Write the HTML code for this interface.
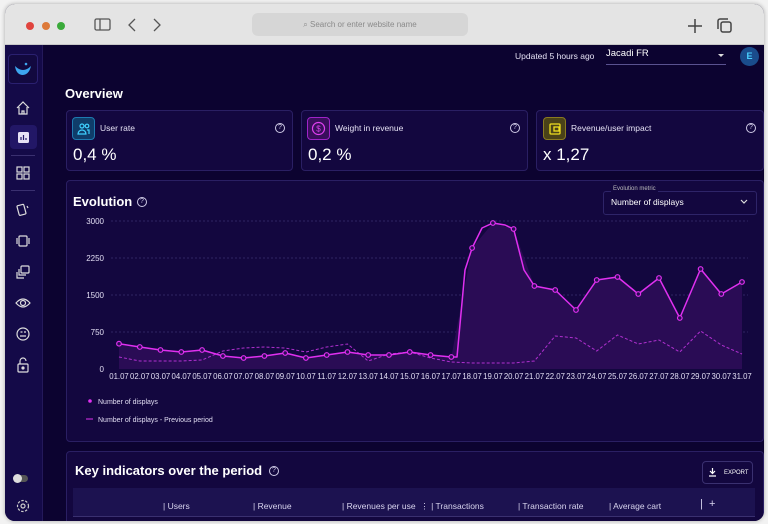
<!DOCTYPE html>
<html><head><meta charset="utf-8"><style>
*{box-sizing:border-box;margin:0;padding:0}
body{width:768px;height:524px;background:#f2f2f2;font-family:"Liberation Sans",sans-serif;overflow:hidden;position:relative}
.win{position:absolute;left:5px;top:4px;width:759px;height:517px;border-radius:10px;overflow:hidden;background:#0c0330;box-shadow:0 0 4px rgba(0,0,0,.3)}
.bar{position:absolute;left:0;top:0;width:100%;height:41px;background:#e4e4e4;border-bottom:1px solid #c8c8c8}
.dot{position:absolute;top:18px;width:8px;height:8px;border-radius:50%}
.url{position:absolute;left:247px;top:9px;width:216px;height:23px;border-radius:6px;background:#d6d6d6;font-size:8px;color:#8a8a8a;text-align:center;line-height:23px}
.side{position:absolute;left:0;top:41px;width:38px;height:480px;background:#140a48;border-right:1px solid #24195a}
.ic{position:absolute;left:10px;color:#d8d4f0}
.card{position:absolute;background:#13073f;border:1px solid #2a1f63;border-radius:4px}
.lbl{position:absolute;font-size:8.5px;color:#e6e2f5}
.big{position:absolute;font-size:17px;color:#fff}
.q{position:absolute;width:10px;height:10px;border:1px solid #cfcae6;border-radius:50%;font-size:7px;color:#cfcae6;text-align:center;line-height:8px}
.th{position:absolute;top:497px;font-size:8.5px;color:#d8d4ee}
</style></head><body>
<div class="win">
 <div class="bar">
  <div class="dot" style="left:21px;background:#e0443e"></div>
  <div class="dot" style="left:37px;background:#dd7a3a"></div>
  <div class="dot" style="left:52px;background:#3aaa3a"></div>
  <svg style="position:absolute;left:89px;top:13px" width="70" height="16" fill="none" stroke="#555" stroke-width="1.3"><rect x="1" y="2" width="15" height="11" rx="1.5"/><line x1="6" y1="2" x2="6" y2="13"/><path d="M41 2l-6 6 6 6M60 2l6 6-6 6"/></svg>
  <div class="url">&#x2315; Search or enter website name</div>
  <svg style="position:absolute;left:682px;top:13px" width="50" height="18" fill="none" stroke="#444" stroke-width="1.5"><path d="M8 2v14M1 9h14"/><rect x="34" y="5" width="10" height="10" rx="2"/><path d="M31 12V4a2 2 0 0 1 2-2h8"/></svg>
 </div>
 <div class="side">
  <div style="position:absolute;left:3px;top:9px;width:30px;height:30px;border:1px solid #2a2070;border-radius:4px;background:#12093f"></div>
  <svg style="position:absolute;left:9px;top:16px" width="18" height="16"><path d="M1 5 Q9 13 17 5 Q15 14 8 14 Q2 13 1 5Z" fill="#3da6f0"/><circle cx="12" cy="3" r="1.3" fill="#3da6f0"/></svg>
  <svg class="ic" style="top:55px" width="16" height="16" fill="none" stroke="#ddd" stroke-width="1.2"><path d="M2 8L8 2l6 6M4 7v7h8V7"/><path d="M7 14v-3h2v3"/></svg>
  <div style="position:absolute;left:5px;top:80px;width:27px;height:24px;border-radius:4px;background:#221766"></div>
  <svg class="ic" style="top:85px" width="16" height="16"><rect x="3" y="2" width="11" height="11" rx="1.5" fill="#e6e2f5"/><path d="M6 10V7M8.5 10V5M11 10V8" stroke="#221766" stroke-width="1.2"/></svg>
  <div style="position:absolute;left:6px;top:110px;width:24px;height:1px;background:#3a3070"></div>
  <svg class="ic" style="top:120px" width="16" height="16" fill="none" stroke="#ddd" stroke-width="1.2"><rect x="2" y="2" width="5" height="5"/><rect x="9" y="2" width="5" height="5"/><rect x="2" y="9" width="5" height="5"/><rect x="9" y="9" width="5" height="5"/></svg>
  <div style="position:absolute;left:6px;top:145px;width:24px;height:1px;background:#3a3070"></div>
  <svg class="ic" style="top:157px" width="16" height="16" fill="none" stroke="#ddd" stroke-width="1.2"><rect x="3" y="3" width="7" height="10" rx="1" transform="rotate(-15 6 8)"/><path d="M12 4l1 2"/></svg>
  <svg class="ic" style="top:188px" width="16" height="16" fill="none" stroke="#ddd" stroke-width="1.2"><rect x="4" y="3" width="8" height="10" rx="1"/><path d="M2 5v6M14 5v6"/></svg>
  <svg class="ic" style="top:219px" width="16" height="16" fill="none" stroke="#ddd" stroke-width="1.2"><rect x="6" y="2" width="8" height="7" rx="1"/><path d="M4 5v6h7M2 8v6h7"/></svg>
  <svg class="ic" style="top:250px" width="16" height="16" fill="none" stroke="#ddd" stroke-width="1.2"><path d="M1 8Q8 0 15 8Q8 16 1 8Z"/><circle cx="8" cy="8" r="2.5"/></svg>
  <svg class="ic" style="top:281px" width="16" height="16" fill="none" stroke="#ddd" stroke-width="1.2"><circle cx="8" cy="8" r="6"/><path d="M5 10h6M5.5 6h2M9 6h2"/></svg>
  <svg class="ic" style="top:312px" width="16" height="16" fill="none" stroke="#ddd" stroke-width="1.2"><rect x="3" y="7" width="10" height="8" rx="1"/><path d="M5 7V4a3 3 0 0 1 6 0"/><circle cx="8" cy="11" r="1" fill="#ddd"/></svg>
  <div style="position:absolute;left:9px;top:430px;width:14px;height:7px;border-radius:4px;background:#555"></div>
  <div style="position:absolute;left:8px;top:429px;width:9px;height:9px;border-radius:50%;background:#ddd"></div>
  <svg class="ic" style="top:453px" width="16" height="16" fill="none" stroke="#ccc" stroke-width="1.2"><circle cx="8" cy="8" r="2"/><circle cx="8" cy="8" r="5.5" stroke-dasharray="2.5 1.5"/></svg>
 </div>
 <div style="position:absolute;left:510px;top:47px;font-size:8.5px;color:#e6e2f5">Updated 5 hours ago</div>
 <div style="position:absolute;left:601px;top:44px;font-size:9.5px;color:#fff">Jacadi FR</div>
 <div style="position:absolute;left:601px;top:60px;width:120px;height:1px;background:#5a5290"></div>
 <div style="position:absolute;left:713px;top:50px;border:3px solid transparent;border-top-color:#ddd"></div>
 <div style="position:absolute;left:735px;top:43px;width:19px;height:19px;border-radius:50%;background:#1a4c8c;color:#4ad0ff;font-size:9px;text-align:center;line-height:19px;font-weight:bold">E</div>
 <div style="position:absolute;left:60px;top:82px;font-size:13px;font-weight:bold;color:#fff">Overview</div>
 <div class="card" style="left:61px;top:106px;width:227px;height:61px"></div>
 <div class="card" style="left:296px;top:106px;width:227px;height:61px"></div>
 <div class="card" style="left:531px;top:106px;width:228px;height:61px"></div>
 <div style="position:absolute;left:67px;top:113px;width:23px;height:23px;border-radius:4px;background:#0f3d6a;border:1px solid #1e7ab0"></div>
 <svg style="position:absolute;left:72px;top:118px" width="14" height="14" fill="none" stroke="#3fd0ff" stroke-width="1.2"><circle cx="5" cy="4" r="2"/><path d="M1 12a4 4 0 0 1 8 0z"/><circle cx="10" cy="4" r="1.8"/><path d="M10 8h2v4"/></svg>
 <div class="lbl" style="left:95px;top:119px">User rate</div>
 <div class="q" style="left:270px;top:119px">?</div>
 <div class="big" style="left:68px;top:141px">0,4 %</div>
 <div style="position:absolute;left:302px;top:113px;width:23px;height:23px;border-radius:4px;background:#3a0e5c;border:1px solid #a024c8"></div>
 <svg style="position:absolute;left:306px;top:117px" width="15" height="15" fill="none" stroke="#e040f0" stroke-width="1.2"><circle cx="7.5" cy="7.5" r="6"/><text x="7.5" y="10.5" font-size="8" fill="#e040f0" stroke="none" text-anchor="middle" font-family="Liberation Sans">$</text></svg>
 <div class="lbl" style="left:330px;top:119px">Weight in revenue</div>
 <div class="q" style="left:505px;top:119px">?</div>
 <div class="big" style="left:303px;top:141px">0,2 %</div>
 <div style="position:absolute;left:538px;top:113px;width:23px;height:23px;border-radius:4px;background:#4a4218;border:1px solid #8a7a20"></div>
 <svg style="position:absolute;left:543px;top:118px" width="14" height="14" fill="none" stroke="#f0e020" stroke-width="1.3"><rect x="2" y="2" width="10" height="10" rx="1"/><rect x="6" y="5" width="5" height="4"/></svg>
 <div class="lbl" style="left:566px;top:119px">Revenue/user impact</div>
 <div class="q" style="left:741px;top:119px">?</div>
 <div class="big" style="left:538px;top:141px">x 1,27</div>
 <div class="card" style="left:61px;top:176px;width:698px;height:262px"></div>
 <div style="position:absolute;left:68px;top:190px;font-size:13px;font-weight:bold;color:#fff">Evolution</div>
 <div class="q" style="left:132px;top:193px">?</div>
 <div style="position:absolute;left:598px;top:187px;width:154px;height:24px;border:1px solid #2e2468;border-radius:3px"></div>
 <div style="position:absolute;left:606px;top:182px;font-size:6px;color:#bbb;background:#13073f;padding:0 2px">Evolution metric</div>
 <div style="position:absolute;left:606px;top:193px;font-size:8.5px;color:#fff">Number of displays</div>
 <svg style="position:absolute;left:735px;top:195px" width="8" height="6" fill="none" stroke="#ddd" stroke-width="1.2"><path d="M1 1l3 3 3-3"/></svg>
 <svg style="position:absolute;left:-5px;top:-4px" width="768" height="524" font-family="Liberation Sans" font-size="8">
  <g stroke="#3a3070" stroke-dasharray="2 2" stroke-width="0.8"><line x1="111" y1="221" x2="748" y2="221"/><line x1="111" y1="258" x2="748" y2="258"/><line x1="111" y1="295" x2="748" y2="295"/><line x1="111" y1="332" x2="748" y2="332"/></g>
  <g fill="#e0dcf2" text-anchor="end"><text x="104" y="224">3000</text><text x="104" y="261">2250</text><text x="104" y="298">1500</text><text x="104" y="335">750</text><text x="104" y="372">0</text></g>
  <polygon fill="#2a0c55" points="119,343.7 139.8,347 160.5,350 181.3,352 202.1,350 222.9,356 243.6,358 264.4,356 285.2,353 305.9,358 326.7,355 347.5,352 368.2,355 389,355 409.8,352 430.6,355 451.3,357 472.1,248 492.9,223 513.6,229 534.4,286 555.2,290 576,310 596.7,280 617.5,277 638.3,294 659,278 679.8,318 700.6,269 721.3,294 742,282 742,369 119,369"/>
  <polyline fill="none" stroke="#b030d0" stroke-width="1" stroke-dasharray="3 2" points="119,357 139.8,361 160.5,361 181.3,361 202.1,360 222.9,351 243.6,348 264.4,347 285.2,348 305.9,352 326.7,347 347.5,344 368.2,361 389,354 409.8,352 430.6,358 451.3,362 472.1,363 492.9,363 513.6,363 534.4,361 555.2,336 576,338 596.7,351 617.5,335 638.3,344 659,340 679.8,352 700.6,331 721.3,345 742,354"/>
  <polyline fill="none" stroke="#e030f0" stroke-width="1.5" stroke-linejoin="round" points="119,343.7 139.8,347 160.5,350 181.3,352 202.1,350 222.9,356 243.6,358 264.4,356 285.2,353 305.9,358 326.7,355 347.5,352 368.2,355 389,355 409.8,352 430.6,355 451.3,357 457,357 465,270 472.1,248 482,228 492.9,223 505,225 513.6,229 524,270 534.4,286 555.2,290 576,310 596.7,280 617.5,277 638.3,294 659,278 679.8,318 700.6,269 721.3,294 742,282"/>
  <g fill="#2a0c55" stroke="#e030f0" stroke-width="1.2"><circle cx="119" cy="343.7" r="2.3"/><circle cx="139.8" cy="347" r="2.3"/><circle cx="160.5" cy="350" r="2.3"/><circle cx="181.3" cy="352" r="2.3"/><circle cx="202.1" cy="350" r="2.3"/><circle cx="222.9" cy="356" r="2.3"/><circle cx="243.6" cy="358" r="2.3"/><circle cx="264.4" cy="356" r="2.3"/><circle cx="285.2" cy="353" r="2.3"/><circle cx="305.9" cy="358" r="2.3"/><circle cx="326.7" cy="355" r="2.3"/><circle cx="347.5" cy="352" r="2.3"/><circle cx="368.2" cy="355" r="2.3"/><circle cx="389" cy="355" r="2.3"/><circle cx="409.8" cy="352" r="2.3"/><circle cx="430.6" cy="355" r="2.3"/><circle cx="451.3" cy="357" r="2.3"/><circle cx="472.1" cy="248" r="2.3"/><circle cx="492.9" cy="223" r="2.3"/><circle cx="513.6" cy="229" r="2.3"/><circle cx="534.4" cy="286" r="2.3"/><circle cx="555.2" cy="290" r="2.3"/><circle cx="576" cy="310" r="2.3"/><circle cx="596.7" cy="280" r="2.3"/><circle cx="617.5" cy="277" r="2.3"/><circle cx="638.3" cy="294" r="2.3"/><circle cx="659" cy="278" r="2.3"/><circle cx="679.8" cy="318" r="2.3"/><circle cx="700.6" cy="269" r="2.3"/><circle cx="721.3" cy="294" r="2.3"/><circle cx="742" cy="282" r="2.3"/></g>
  <g fill="#e0dcf2" text-anchor="middle" font-size="7.8"><text x="119" y="379">01.07</text><text x="139.8" y="379">02.07</text><text x="160.5" y="379">03.07</text><text x="181.3" y="379">04.07</text><text x="202.1" y="379">05.07</text><text x="222.9" y="379">06.07</text><text x="243.6" y="379">07.07</text><text x="264.4" y="379">08.07</text><text x="285.2" y="379">09.07</text><text x="305.9" y="379">10.07</text><text x="326.7" y="379">11.07</text><text x="347.5" y="379">12.07</text><text x="368.2" y="379">13.07</text><text x="389" y="379">14.07</text><text x="409.8" y="379">15.07</text><text x="430.6" y="379">16.07</text><text x="451.3" y="379">17.07</text><text x="472.1" y="379">18.07</text><text x="492.9" y="379">19.07</text><text x="513.6" y="379">20.07</text><text x="534.4" y="379">21.07</text><text x="555.2" y="379">22.07</text><text x="576" y="379">23.07</text><text x="596.7" y="379">24.07</text><text x="617.5" y="379">25.07</text><text x="638.3" y="379">26.07</text><text x="659" y="379">27.07</text><text x="679.8" y="379">28.07</text><text x="700.6" y="379">29.07</text><text x="721.3" y="379">30.07</text><text x="742" y="379">31.07</text></g>
  <circle cx="90" cy="401" r="1.8" fill="#e030f0"/>
  <text x="98" y="404" fill="#e0dcf2" font-size="7">Number of displays</text>
  <line x1="86" y1="419" x2="93" y2="419" stroke="#e030f0"/>
  <text x="98" y="422" fill="#e0dcf2" font-size="7">Number of displays - Previous period</text>
 </svg>
 <div class="card" style="left:61px;top:447px;width:698px;height:80px"></div>
 <div style="position:absolute;left:70px;top:459px;font-size:13px;font-weight:bold;color:#fff">Key indicators over the period</div>
 <div class="q" style="left:264px;top:462px">?</div>
 <div style="position:absolute;left:697px;top:457px;width:51px;height:23px;border:1px solid #3a3070;border-radius:4px;font-size:6px;color:#fff;display:flex;align-items:center;padding-left:21px">EXPORT</div>
 <svg style="position:absolute;left:703px;top:463px" width="9" height="10" fill="none" stroke="#fff" stroke-width="1.2"><path d="M4.5 1v5M2 4l2.5 2.5L7 4M1 9h7"/></svg>
 <div style="position:absolute;left:68px;top:484px;width:682px;height:29px;background:#1c1250;border-bottom:1px solid #3a3070"></div>
 <div class="th" style="left:158px">| Users</div>
 <div class="th" style="left:248px">| Revenue</div>
 <div class="th" style="left:337px">| Revenues per use &nbsp;⋮ | Transactions</div>
 <div class="th" style="left:513px">| Transaction rate</div>
 <div class="th" style="left:604px">| Average cart</div>
 <div class="th" style="left:695px;font-size:11px;top:494px">| &nbsp;+</div>
</div>
</body></html>
